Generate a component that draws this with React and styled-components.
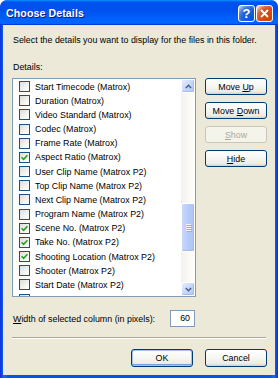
import React from "react";
import styled, { createGlobalStyle, css } from "styled-components";

const GlobalStyle = createGlobalStyle`
  html, body { margin: 0; padding: 0; background: #ffffff; }
  body { font-family: "Liberation Sans", Arial, sans-serif; }
  * { box-sizing: border-box; }
`;

const Window = styled.div`
  width: 278px;
  height: 378px;
  display: flex;
  flex-direction: column;
  background: linear-gradient(90deg, #0831d9 0%, #166aee 1.5%, #0055ea 3%, #0055ea 97%, #166aee 98.5%, #0831d9 100%);
  border-radius: 7px 7px 0 0;
  overflow: hidden;
`;

const TitleBar = styled.div`
  height: 25px;
  flex: none;
  display: flex;
  align-items: center;
  justify-content: space-between;
  padding: 0 5px 0 6px;
  background: linear-gradient(180deg, #0997ff 0%, #0053ee 8%, #0050ee 40%, #0066ff 88%, #0066ff 93%, #005bff 95%, #003dd7 96%, #003dd7 100%);
  border-radius: 7px 7px 0 0;
`;

const Title = styled.span`
  color: #ffffff;
  font-family: "Liberation Sans", Arial, sans-serif;
  font-weight: bold;
  font-size: 10.6px;
  letter-spacing: 0.1px;
  text-shadow: 1px 1px 0 #0a1883;
`;

const Controls = styled.div`
  display: flex;
  gap: 1px;
  margin-top: 1px;
`;

const CtrlButton = styled.div`
  width: 17px;
  height: 17px;
  border: 1px solid #ffffff;
  border-radius: 3px;
  display: flex;
  align-items: center;
  justify-content: center;
  color: #fff;
  font-family: "Liberation Sans", Arial, sans-serif;
  font-weight: bold;
  font-size: 13px;
  ${(p) =>
    p.$close
      ? css`
          background: radial-gradient(circle at 90% 90%, #cc4600 0%, #e0481f 55%, #d86a4e 72%, #ffccb2 92%, #ffffff 100%);
        `
      : css`
          background: radial-gradient(circle at 90% 90%, #0054e9 0%, #2263d5 55%, #4479e4 70%, #a3bbec 90%, #ffffff 100%);
        `}
`;

const Body = styled.div`
  flex: 1;
  margin: 0 3px 3px 3px;
  background: #ece9d8;
  padding: 9px 8px 0 9px;
  display: flex;
  flex-direction: column;
  font-family: "Liberation Sans", Arial, sans-serif;
  font-size: 8.9px;
  color: #000;
`;

const Label = styled.div`
  height: 12px;
  line-height: 12px;
  padding-left: 1px;
  margin-top: ${(p) => p.$mt || 0}px;
  white-space: nowrap;
`;

const MainRow = styled.div`
  display: flex;
  gap: 9px;
  margin-top: 5px;
`;

const ListBox = styled.div`
  width: 184px;
  height: 219px;
  border: 1px solid #7f9db9;
  background: #fff;
  display: flex;
  overflow: hidden;
`;

const Items = styled.div`
  flex: 1;
  padding-top: 0.6px;
  overflow: hidden;
`;

const Item = styled.div`
  height: 14.17px;
  display: flex;
  align-items: center;
  padding-left: 6px;
  gap: 5px;
  white-space: nowrap;
`;

const Box = styled.span`
  width: 11px;
  height: 11px;
  flex: none;
  border: 1px solid #1c5180;
  background: linear-gradient(135deg, #dcdcd7 0%, #f4f4f1 60%, #ffffff 100%);
  display: flex;
  align-items: center;
  justify-content: center;
`;

const Scrollbar = styled.div`
  width: 14px;
  flex: none;
  display: flex;
  flex-direction: column;
  background: linear-gradient(90deg, #f3f1ec 0%, #fefefb 100%);
`;

const ScrollBtn = styled.div`
  height: 14px;
  flex: none;
  border: 1px solid #fff;
  border-radius: 2px;
  background: linear-gradient(135deg, #e6eefc 0%, #c1d3fb 60%, #b4c8f6 100%);
  box-shadow: inset -1px -1px 0 #a6bcf0;
  display: flex;
  align-items: center;
  justify-content: center;
`;

const Spacer = styled.div`
  flex: ${(p) => (p.$h ? "none" : 1)};
  height: ${(p) => (p.$h ? `${p.$h}px` : "auto")};
`;

const Thumb = styled.div`
  height: 49px;
  flex: none;
  border: 1px solid #fff;
  border-radius: 2px;
  background: linear-gradient(90deg, #c9d8fc 0%, #b8cbf9 50%, #b0c4f4 100%);
  box-shadow: inset -1px -1px 0 #a4b9ee;
  display: flex;
  flex-direction: column;
  align-items: center;
  justify-content: center;
  gap: 1px;
`;

const Grip = styled.span`
  width: 5px;
  height: 1px;
  background: #eef3fe;
  box-shadow: 1px 1px 0 #8cb0f8;
`;

const ButtonCol = styled.div`
  display: flex;
  flex-direction: column;
  gap: 7px;
`;

const Button = styled.div`
  width: 62px;
  height: 17px;
  border: 1px solid ${(p) => (p.$disabled ? "#c9c7ba" : "#003c74")};
  border-radius: 3px;
  background: ${(p) =>
    p.$disabled ? "#f5f4ea" : "linear-gradient(180deg, #ffffff 0%, #f6f6f3 50%, #ecebe4 85%, #d6d0c5 100%)"};
  color: ${(p) => (p.$disabled ? "#aca899" : "#000")};
  display: flex;
  align-items: center;
  justify-content: center;
  white-space: nowrap;
  ${(p) =>
    p.$default &&
    css`
      box-shadow: inset 0 0 0 1px #a8c0ec, inset 0 -1px 0 1px #7b9ce0;
    `}
`;

const WidthRow = styled.div`
  display: flex;
  align-items: center;
  margin-top: 13px;
  padding-left: 1px;
`;

const NumberInput = styled.div`
  width: 25px;
  height: 17px;
  margin-left: auto;
  margin-right: 72px;
  border: 1px solid #7f9db9;
  background: #fff;
  text-align: right;
  line-height: 15px;
  padding-right: 4px;
`;

const Separator = styled.div`
  margin: 10px 0 0 0;
  width: 254px;
  height: 2px;
  border-top: 1px solid #aca899;
  border-bottom: 1px solid #ffffff;
`;

const Footer = styled.div`
  display: flex;
  justify-content: flex-end;
  gap: 12px;
  margin-top: 10px;
`;

const FooterButton = styled(Button)`
  height: 18px;
`;

const Check = () => (
  <svg width="7" height="7" viewBox="0 0 7 7">
    <path d="M0.5 3.2 L2.6 5.3 L6.5 1.2" stroke="#21a121" strokeWidth="1.6" fill="none" />
  </svg>
);

const Arrow = ({ down }) => (
  <svg width="7" height="5" viewBox="0 0 7 5">
    <path
      d={down ? "M0.8 1 L3.5 3.7 L6.2 1" : "M0.8 4 L3.5 1.3 L6.2 4"}
      stroke="#4d6185"
      strokeWidth="1.5"
      fill="none"
    />
  </svg>
);

const items = [
  ["Start Timecode (Matrox)", false],
  ["Duration (Matrox)", false],
  ["Video Standard (Matrox)", false],
  ["Codec (Matrox)", false],
  ["Frame Rate (Matrox)", false],
  ["Aspect Ratio (Matrox)", true],
  ["User Clip Name (Matrox P2)", false],
  ["Top Clip Name (Matrox P2)", false],
  ["Next Clip Name (Matrox P2)", false],
  ["Program Name (Matrox P2)", false],
  ["Scene No. (Matrox P2)", true],
  ["Take No. (Matrox P2)", true],
  ["Shooting Location (Matrox P2)", true],
  ["Shooter (Matrox P2)", false],
  ["Start Date (Matrox P2)", false],
  ["", false],
];

export default function App() {
  return (
    <>
      <GlobalStyle />
      <Window>
        <TitleBar>
          <Title>Choose Details</Title>
          <Controls>
            <CtrlButton>?</CtrlButton>
            <CtrlButton $close>
              <svg width="9" height="9" viewBox="0 0 9 9">
                <path d="M1 1 L8 8 M8 1 L1 8" stroke="#fff" strokeWidth="1.8" />
              </svg>
            </CtrlButton>
          </Controls>
        </TitleBar>
        <Body>
          <Label>Select the details you want to display for the files in this folder.</Label>
          <Label $mt={15}>Details:</Label>
          <MainRow>
            <ListBox>
              <Items>
                {items.map(([name, checked], i) => (
                  <Item key={i}>
                    <Box>{checked && <Check />}</Box>
                    {name && <span>{name}</span>}
                  </Item>
                ))}
              </Items>
              <Scrollbar>
                <ScrollBtn>
                  <Arrow />
                </ScrollBtn>
                <Spacer $h={110} />
                <Thumb>
                  <Grip />
                  <Grip />
                  <Grip />
                  <Grip />
                </Thumb>
                <Spacer />
                <ScrollBtn>
                  <Arrow down />
                </ScrollBtn>
              </Scrollbar>
            </ListBox>
            <ButtonCol>
              <Button>
                Move&nbsp;<u>U</u>p
              </Button>
              <Button>
                Move&nbsp;<u>D</u>own
              </Button>
              <Button $disabled>
                <u>S</u>how
              </Button>
              <Button>
                <u>H</u>ide
              </Button>
            </ButtonCol>
          </MainRow>
          <WidthRow>
            <span>
              <u>W</u>idth of selected column (in pixels):
            </span>
            <NumberInput>60</NumberInput>
          </WidthRow>
          <Separator />
          <Footer>
            <FooterButton $default>OK</FooterButton>
            <FooterButton>Cancel</FooterButton>
          </Footer>
        </Body>
      </Window>
    </>
  );
}
